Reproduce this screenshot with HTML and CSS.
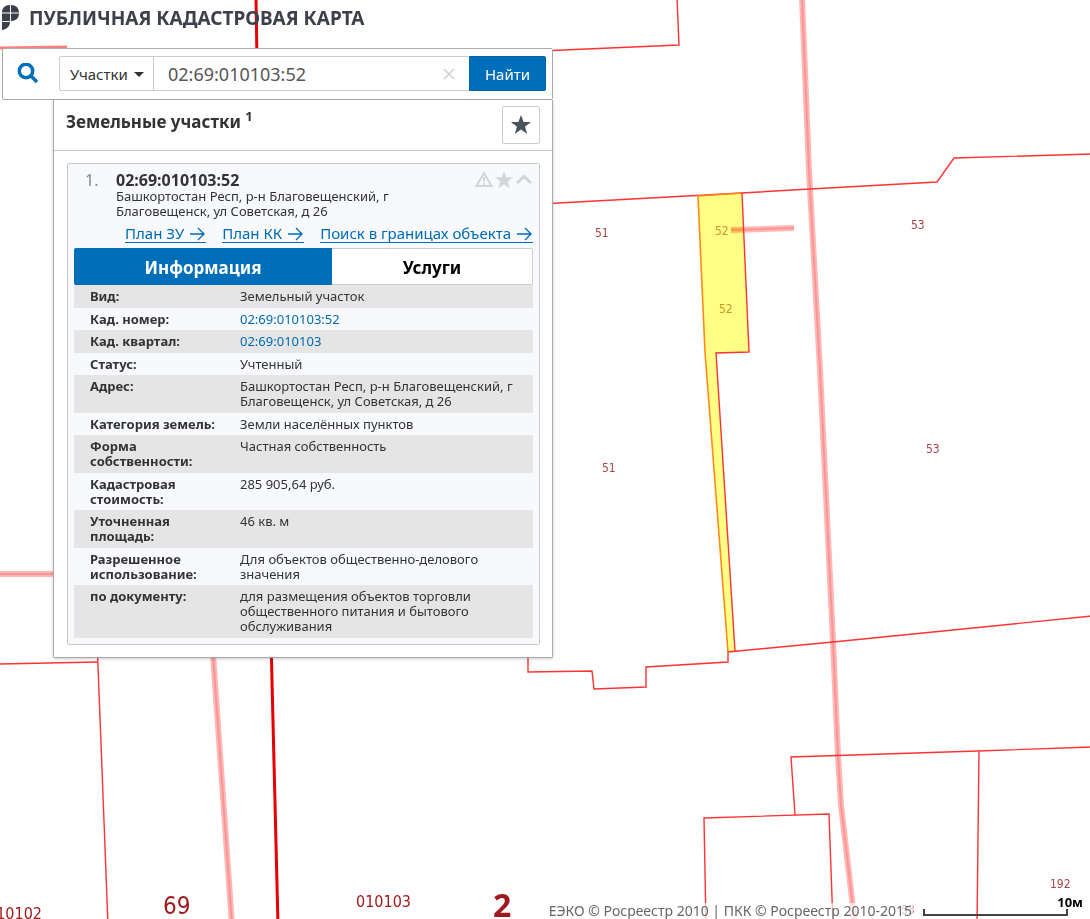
FILE: index.html
```
<!DOCTYPE html>
<html lang="ru">
<head>
<meta charset="utf-8">
<title>Публичная кадастровая карта</title>
<link rel="stylesheet" href="styles.css">
</head>
<body>
<svg class="map" width="2180" height="1838" viewBox="0 0 2180 1838" aria-hidden="true">
  <g class="road">
    <path id="main-road" d="M802 -2L809 170L820 370L833 641L838 756L841 805L855 925"/>
    <path id="west-road" d="M212 640L232 925"/>
    <path id="side-road" d="M-2 574H60"/>
  </g>
  <path class="road thin" d="M-2 48L67 47"/>
  <g class="road core">
    <use href="#main-road"/>
    <use href="#west-road"/>
    <use href="#side-road"/>
  </g>
  <path class="parcel-fill" d="M698 196L742 193L749 352L716 353L735 651L728 652L705 352Z"/>
  <path class="road" d="M731 230L794 228"/>
  <path class="road core" d="M731 230L794 228"/>
  <g class="border">
    <path d="M677 -2L679 45L540 51"/>
    <path d="M540 204L742 193L810 189L937 182L954 158L1092 154"/>
    <path d="M742 193L749 352L716 353L735 651"/>
    <path d="M528 640V672L592 671L594 689L646 687V667L728 662V652L833 642L1092 616"/>
    <path d="M-2 664L97 662M97 640L108 925"/>
    <path d="M706 925L704 818L829 814L833 925"/>
    <path d="M795 815L791 757L978 751L1092 747M979 751L977 925"/>
  </g>
  <path class="parcel-edge" d="M728 652L705 352L698 196L742 193"/>
  <path class="quarter" d="M256 -2L257 60M271 640L278 925"/>
  <g class="label">
    <text x="595" y="237">51</text>
    <text x="602" y="472">51</text>
    <text x="911" y="229">53</text>
    <text x="926" y="453">53</text>
    <text x="1050" y="888">192</text>
    <text x="901" y="914">53</text>
    <text class="own" x="715" y="235">52</text>
    <text class="own" x="719" y="313">52</text>
  </g>
  <g class="label dark">
    <text class="m" x="-13" y="919">010102</text>
    <text class="m" x="356" y="907">010103</text>
    <text class="l" x="163" y="914">69</text>
    <text class="xl" x="493" y="917">2</text>
  </g>
</svg>

<div class="app">
  <header class="brand">
    <svg class="logo" width="18" height="32" viewBox="0 0 18 32" aria-hidden="true">
      <path d="M8 5V12.500H0C0 8 3 5 8 5ZM9 5C14 5 17 8 17 12.500H9ZM0 13.500H8V21H0ZM9 13.500H17C17 18 14 21 9 21ZM0 22H8C8 26 5 29.500 0 30Z"/>
    </svg>
    <h1>ПУБЛИЧНАЯ КАДАСТРОВАЯ КАРТА</h1>
  </header>

  <main class="panel">
    <form class="search">
      <button class="icon-button" type="button" aria-label="Поиск">
        <svg width="22" height="22" viewBox="0 0 22 22"><circle cx="9" cy="8" r="6.700"/><path d="M14 13L20 19"/></svg>
      </button>
      <div class="group">
        <button class="kind" type="button">Участки <span class="caret"></span></button>
        <input class="query" type="text" value="02:69:010103:52" aria-label="Кадастровый номер">
        <button class="clear" type="reset" aria-label="Очистить">
          <svg width="12" height="12" viewBox="0 0 12 12"><path d="M1 1L11 11M11 1L1 11"/></svg>
        </button>
        <button class="find" type="button">Найти</button>
      </div>
    </form>

    <section class="results">
      <div class="results-head">
        <h2>Земельные участки <sup>1</sup></h2>
        <button class="favorite" type="button" aria-label="Избранное">
          <svg width="20" height="20" viewBox="0 0 20 20"><path d="M10 0L12.600 7H20L14 11.700L16.300 19L10 14.600L3.700 19L6 11.700L0 7H7.400Z"/></svg>
        </button>
      </div>

      <article class="card">
        <div class="summary">
          <span class="index">1.</span>
          <div class="where">
            <h3>02:69:010103:52</h3>
            <p>Башкортостан Респ, р-н Благовещенский, г Благовещенск, ул Советская, д 26</p>
          </div>
          <div class="tools">
            <svg width="18" height="18" viewBox="0 0 18 18"><path class="stroke" d="M9 2L16.500 15H1.500Z"/><path class="stroke" d="M9 6V11M9 12V14"/></svg>
            <svg width="18" height="18" viewBox="0 0 20 20"><path d="M10 0L12.600 7H20L14 11.700L16.300 19L10 14.600L3.700 19L6 11.700L0 7H7.400Z"/></svg>
            <svg width="18" height="18" viewBox="0 0 18 18"><path class="stroke bold" d="M2 12L9 5.500L16 12"/></svg>
          </div>
        </div>
        <nav class="links">
          <a href="#">План ЗУ <svg width="16" height="14" viewBox="0 0 16 14"><path d="M0 7H14M8 1L14 7L8 13"/></svg></a>
          <a href="#">План КК <svg width="16" height="14" viewBox="0 0 16 14"><path d="M0 7H14M8 1L14 7L8 13"/></svg></a>
          <a href="#">Поиск в границах объекта <svg width="16" height="14" viewBox="0 0 16 14"><path d="M0 7H14M8 1L14 7L8 13"/></svg></a>
        </nav>
        <div class="tabs">
          <button class="tab active" type="button">Информация</button>
          <button class="tab" type="button">Услуги</button>
        </div>
        <table class="info">
          <tbody>
            <tr><th scope="row">Вид:</th><td>Земельный участок</td></tr>
            <tr><th scope="row">Кад. номер:</th><td><a href="#">02:69:010103:52</a></td></tr>
            <tr><th scope="row">Кад. квартал:</th><td><a href="#">02:69:010103</a></td></tr>
            <tr><th scope="row">Статус:</th><td>Учтенный</td></tr>
            <tr><th scope="row">Адрес:</th><td>Башкортостан Респ, р-н Благовещенский, г Благовещенск, ул Советская, д 26</td></tr>
            <tr><th scope="row">Категория земель:</th><td>Земли населённых пунктов</td></tr>
            <tr><th scope="row">Форма<br>собственности:</th><td>Частная собственность</td></tr>
            <tr><th scope="row">Кадастровая<br>стоимость:</th><td>285 905,64 руб.</td></tr>
            <tr><th scope="row">Уточненная<br>площадь:</th><td>46 кв. м</td></tr>
            <tr><th scope="row">Разрешенное<br>использование:</th><td>Для объектов общественно-делового<br>значения</td></tr>
            <tr><th scope="row">по документу:</th><td>для размещения объектов торговли<br>общественного питания и бытового<br>обслуживания</td></tr>
          </tbody>
        </table>
      </article>
    </section>
  </main>

  <footer class="bottom">
    <span class="copyright">ЕЭКО © Росреестр 2010 | ПКК © Росреестр 2010-2015</span>
    <div class="scale"><span>10м</span><div class="ruler"></div></div>
  </footer>
</div>
</body>
</html>
```
FILE: styles.css
```
* { box-sizing: border-box; }
body {
  margin: 0;
  background: #fefefe;
  color: #333;
  font: 13px/15px "Noto Sans", sans-serif;
}
h1, h2, h3, p { margin: 0; }
button, input { font: inherit; color: inherit; margin: 0; }
button { cursor: pointer; padding: 0; }
a { color: #006bb3; }
svg { display: block; }

/* map layer */
.map { position: fixed; top: 0; left: 0; fill: none; }
.road { stroke: #ff0000; stroke-opacity: .28; stroke-width: 6; }
.road.core { stroke-opacity: .2; stroke-width: 2; }
.road.thin { stroke-opacity: .5; stroke-width: 3; }
.border { stroke: #f33; stroke-width: 1.4; }
.parcel-fill { fill: #ffff85; }
.parcel-edge { stroke: #ff8a1c; stroke-width: 1.6; }
.quarter { stroke: #e60000; stroke-width: 3; }
.label text { fill: #a84448; font: 12px "DejaVu Sans Condensed", "DejaVu Sans", sans-serif; }
.label .own { fill: #cc9326; }
.label.dark text { fill: #a0191e; }
.label .m { font-size: 16px; }
.label .l { font-size: 24px; }
.label.dark .xl { font: 700 32px "Noto Sans", sans-serif; }

.app {
  position: relative;
  min-height: 100vh;
  display: flex;
  flex-direction: column;
}
.brand { display: flex; height: 48px; gap: 9px; padding-left: 2px; }
.logo { fill: #3d404a; }
.brand h1 {
  padding-top: 6px;
  font-size: 19px;
  line-height: 24px;
  font-weight: 700;
  color: #3d404a;
}

/* search panel */
.panel { width: 551px; max-width: calc(100% - 4px); margin-left: 2px; }
.search {
  display: flex;
  align-items: center;
  padding: 7px 6px 8px 0;
  background: #fff;
  border: 1px solid #aaa;
  border-radius: 2px;
}
.icon-button {
  width: 56px;
  flex: none;
  display: flex;
  padding-left: 14px;
  border: 0;
  background: none;
}
.icon-button svg { fill: none; stroke: #0070ba; stroke-width: 3.5; }
.group {
  flex: 1;
  display: flex;
  height: 35px;
  border: 1px solid #ccc;
  border-radius: 2px;
  background: #fff;
}
.kind {
  display: flex;
  align-items: center;
  gap: 6px;
  width: 94px;
  padding: 2px 0 0 10px;
  border: 0;
  border-right: 1px solid #ccc;
  background: none;
  font-size: 15px;
  white-space: nowrap;
}
.caret { border: 5px solid transparent; border-top-color: #333; border-bottom: 0; }
.query {
  flex: 1;
  min-width: 0;
  padding: 0 0 0 14px;
  border: 0;
  outline: 0;
  background: none;
  font-size: 18px;
  color: #555;
}
.clear { width: 42px; display: grid; place-items: center; border: 0; background: none; }
.clear svg { stroke: #ccd1d5; stroke-width: 1.5; }
.find {
  width: 77px;
  margin: -1px;
  padding-top: 2px;
  border: 1px solid #0062a3;
  border-radius: 0 2px 2px 0;
  background: #006eb9;
  color: #fff;
  font-size: 15px;
}

/* results */
.results {
  margin-left: 51px;
  padding-bottom: 12px;
  background: #fff;
  border: 1px solid #aaa;
  border-top: 0;
  border-radius: 0 0 2px 2px;
  box-shadow: 0 1px 3px #0003;
}
.results-head {
  display: flex;
  justify-content: space-between;
  padding: 6px 12px;
  border-bottom: 1px solid #ccc;
}
.results-head h2 { padding-top: 4px; font-size: 17px; line-height: 24px; }
.results-head sup { font-size: 13px; line-height: 0; }
.favorite {
  width: 38px;
  height: 38px;
  display: grid;
  place-items: center;
  border: 1px solid #ccc;
  border-radius: 2px;
  background: #fff;
}
.favorite svg { fill: #4a525c; }

.card {
  margin: 12px 12px 0 13px;
  padding: 7px 6px 6px;
  border: 1px solid #c8cacc;
  border-radius: 2px;
  background: #f7f9fc;
}
.summary { display: flex; }
.index { width: 42px; flex: none; padding-left: 11px; font-size: 16px; line-height: 18px; color: #888; }
.where { flex: 1; }
.where h3 { font-size: 16px; line-height: 18px; }
.where p { max-width: 290px; }
.tools { display: flex; gap: 2px; fill: #d3d5d8; }
.tools .stroke { fill: none; stroke: #d3d5d8; stroke-width: 2; }
.tools .bold { stroke-width: 3; }
.links {
  display: flex;
  justify-content: flex-end;
  gap: 16px;
  padding: 6px 0 5px;
  font-size: 15px;
  line-height: 17px;
}
.links a {
  display: flex;
  align-items: center;
  gap: 6px;
  text-decoration: none;
  border-bottom: 1px solid #006bb3;
}
.links svg { fill: none; stroke: #006bb3; stroke-width: 1.3; }
.tabs { display: grid; grid-template-columns: 258fr 201fr; height: 37px; }
.tab {
  padding-top: 2px;
  border: 1px solid #ccc;
  border-left: 0;
  border-radius: 0 2px 2px 0;
  background: #fff;
  color: #000;
  font-size: 17px;
  font-weight: 700;
}
.tab.active { border: 0; border-radius: 2px 0 0 2px; background: #006eb9; color: #fff; }
.info { width: 100%; border-collapse: collapse; }
.info th, .info td { vertical-align: top; text-align: left; padding: 4px 16px 3px 0; }
.info th { width: 166px; padding-left: 16px; }
.info tr:nth-child(odd) { background: #e5e5e5; }
.info tr:nth-child(odd) > * { padding-bottom: 4px; }
.info a { text-decoration: none; }

/* attribution and scale */
.bottom {
  margin-top: auto;
  display: flex;
  justify-content: flex-end;
  align-items: flex-end;
  padding-right: 7px;
}
.copyright { padding: 0 1px; background: #ffffffb3; color: #666; font-size: 14px; line-height: 16px; }
.scale { width: 160px; margin-left: 10px; font-weight: 700; color: #000; line-height: 14px; text-align: right; }
.scale span { display: block; }
.ruler { width: 145px; height: 7px; margin-bottom: 3px; border: 2px solid #444; border-top: 0; }
```
